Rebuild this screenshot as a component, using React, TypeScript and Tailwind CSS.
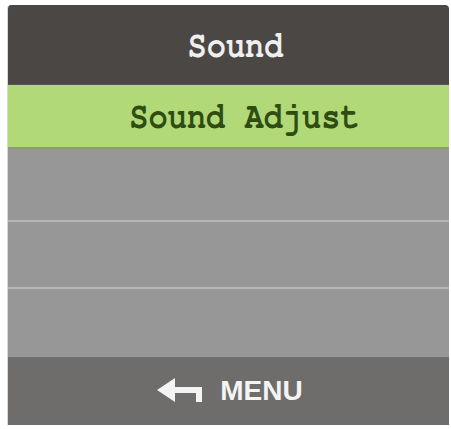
import React from 'react';

const mono = { fontFamily: 'FreeMono, "Liberation Mono", monospace' };

function BackArrow() {
  return (
    <svg width="48" height="26" viewBox="0 0 48 26" className="shrink-0">
      {/* arrowhead + shaft with a downward hook on the right */}
      <path d="M1 12 L19 0 L19 9 L46 9 L46 24 L40 24 L40 15 L19 15 L19 24 Z" fill="#f4f4f4" />
    </svg>
  );
}

export default function App() {
  const emptyRows = [71, 65, 68];

  return (
    <div className="w-[451px] h-[429px] bg-white pt-[5px] pl-[7px]">
      <div className="w-[442px] flex flex-col rounded-t-[4px] overflow-hidden border-l border-[#d6d6d6]">
        {/* Title */}
        <div
          className="h-[80px] bg-[#4b4745] flex items-center justify-center text-[32px] font-bold text-[#efefef] border-b border-[#5c5957]"
          style={mono}
        >
          <span className="scale-y-[1.2] pl-[14px]">Sound</span>
        </div>

        {/* Selected item */}
        <div
          className="h-[64px] bg-[#b2d977] flex items-center justify-center text-[32px] font-bold text-[#2f4d12] border-b-2 border-[#8c9a7c]"
          style={mono}
        >
          <span className="scale-y-[1.2] pl-[32px]">Sound Adjust</span>
        </div>

        {/* Empty slots */}
        {emptyRows.map((h, i) => (
          <div key={i} className="flex flex-col">
            {i > 0 && <div className="h-[2px] bg-[#b6b6b6]" />}
            <div className="bg-[#979797]" style={{ height: h }} />
          </div>
        ))}

        {/* Footer */}
        <div className="h-[68px] bg-[#6f6d6c] flex items-center justify-center gap-[16px] pl-[2px]">
          <BackArrow />
          <span
            className="text-[28px] font-bold text-[#f4f4f4] leading-none"
            style={{ fontFamily: '"Liberation Sans", Arial, sans-serif' }}
          >
            MENU
          </span>
        </div>
      </div>
    </div>
  );
}
